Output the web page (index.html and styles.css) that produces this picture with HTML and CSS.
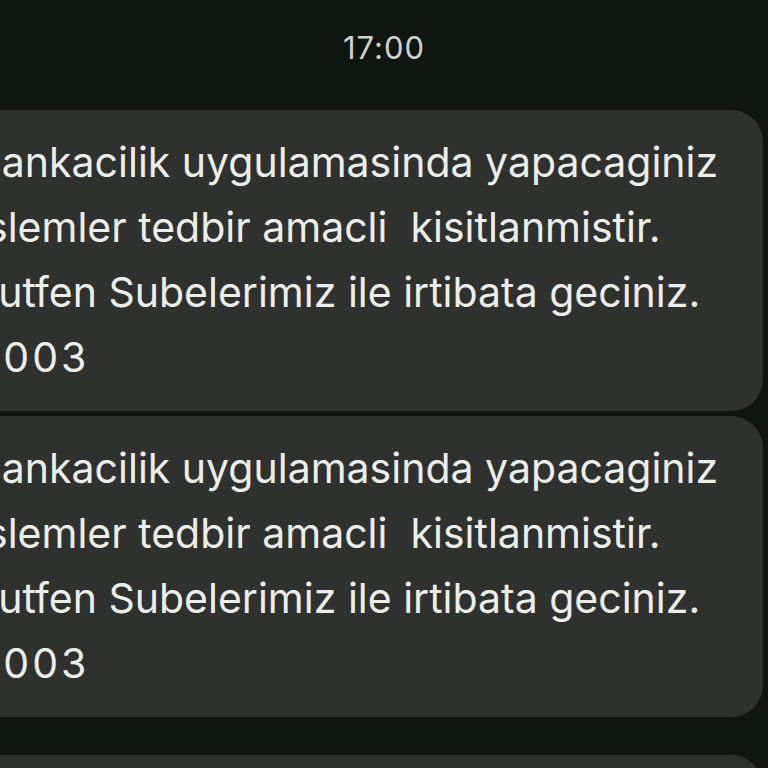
FILE: index.html
```html
<!DOCTYPE html>
<html lang="tr">
<head>
    <meta charset="UTF-8">
    <meta name="viewport" content="width=device-width, initial-scale=1.0">
    <title>Mesajlar</title>
    <link rel="stylesheet" href="styles.css">
</head>
<body>
    <header class="stamp">17:00</header>
    <main class="thread">
        <div class="bubble">
            <p>Bankacilik uygulamasinda yapacaginiz<br>Islemler tedbir amacli  kisitlanmistir.<br>Lutfen Subelerimiz ile irtibata geciniz.<br><span class="code">8003</span></p>
        </div>
        <div class="bubble">
            <p>Bankacilik uygulamasinda yapacaginiz<br>Islemler tedbir amacli  kisitlanmistir.<br>Lutfen Subelerimiz ile irtibata geciniz.<br><span class="code">8003</span></p>
        </div>
        <div class="bubble bubble-next"></div>
    </main>
</body>
</html>
```

FILE: styles.css
```css
body {
    margin: 0;
    padding: 0;
    background-color: #0f150f;
    font-family: Inter, "Open Sans", sans-serif;
    overflow: hidden;
    height: 768px;
}

/* Hora del grupo */
.stamp {
    height: 110px;
    box-sizing: border-box;
    padding-top: 28px;
    text-align: center;
    font-size: 31px;
    line-height: 40px;
    letter-spacing: 1px;
    color: #cfd2cc;
}

/* Burbujas */
.thread {
    display: flex;
    flex-direction: column;
    gap: 5px;
    margin-left: -120px;
    margin-right: 5px;
}

.bubble {
    background-color: #2f312e;
    border-radius: 32px;
    padding: 20px 40px 21px 95px;
}

.bubble p {
    margin: 0;
    white-space: pre;
    font-size: 41px;
    line-height: 65px;
    color: #eceeea;
}

.bubble .code {
    letter-spacing: 3px;
}

.bubble-next {
    margin-top: 33px;
    height: 80px;
    padding: 0;
}
```
